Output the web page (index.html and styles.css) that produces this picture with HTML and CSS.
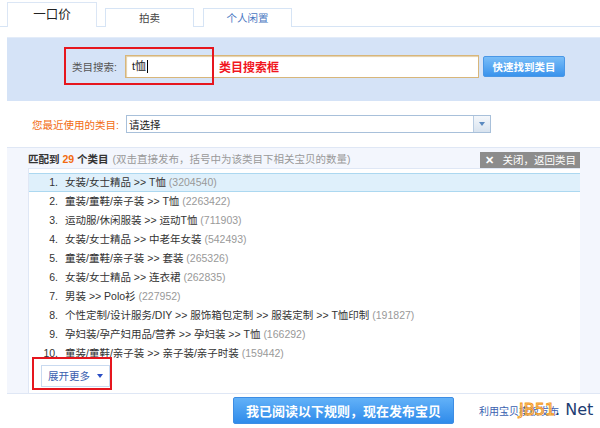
FILE: index.html
```html
<!DOCTYPE html>
<html lang="zh-CN">
<head>
    <meta charset="UTF-8">
    <title>发布宝贝 - 选择类目</title>
    <link rel="stylesheet" href="styles.css">
</head>
<body>
    <div class="tabs">
        <div class="tab active">一口价</div>
        <div class="tab">拍卖</div>
        <div class="tab blue">个人闲置</div>
    </div>

    <div class="search-panel">
        <div class="search-row">
            <span class="search-label">类目搜索:</span>
            <div class="search-input">t恤<span class="caret"></span></div>
            <button class="btn-find">快速找到类目</button>
            <div class="mark mark-search"></div>
            <span class="mark-text">类目搜索框</span>
        </div>
    </div>

    <div class="recent">
        <span class="recent-label">您最近使用的类目:</span>
        <div class="select">
            <span>请选择</span>
            <span class="select-arrow"><i></i></span>
        </div>
    </div>

    <div class="match-panel">
        <div class="match-head">
            <span class="match-title">匹配到 <em>29</em> 个类目</span>
            <span class="match-tip">(双击直接发布，括号中为该类目下相关宝贝的数量)</span>
            <span class="btn-close"><b>✕</b> 关闭，返回类目</span>
        </div>
        <div class="match-list">
            <ul>
                <li class="on"><span class="no">1.</span>女装/女士精品 &gt;&gt; T恤 <span class="count">(3204540)</span></li>
                <li><span class="no">2.</span>童装/童鞋/亲子装 &gt;&gt; T恤 <span class="count">(2263422)</span></li>
                <li><span class="no">3.</span>运动服/休闲服装 &gt;&gt; 运动T恤 <span class="count">(711903)</span></li>
                <li><span class="no">4.</span>女装/女士精品 &gt;&gt; 中老年女装 <span class="count">(542493)</span></li>
                <li><span class="no">5.</span>童装/童鞋/亲子装 &gt;&gt; 套装 <span class="count">(265326)</span></li>
                <li><span class="no">6.</span>女装/女士精品 &gt;&gt; 连衣裙 <span class="count">(262835)</span></li>
                <li><span class="no">7.</span>男装 &gt;&gt; Polo衫 <span class="count">(227952)</span></li>
                <li><span class="no">8.</span>个性定制/设计服务/DIY &gt;&gt; 服饰箱包定制 &gt;&gt; 服装定制 &gt;&gt; T恤印制 <span class="count">(191827)</span></li>
                <li><span class="no">9.</span>孕妇装/孕产妇用品/营养 &gt;&gt; 孕妇装 &gt;&gt; T恤 <span class="count">(166292)</span></li>
                <li><span class="no">10.</span>童装/童鞋/亲子装 &gt;&gt; 亲子装/亲子时装 <span class="count">(159442)</span></li>
            </ul>
            <div class="more-wrap">
                <span class="btn-more">展开更多 <i></i></span>
                <div class="mark mark-more"></div>
            </div>
        </div>
    </div>

    <div class="footer">
        <button class="btn-publish">我已阅读以下规则，现在发布宝贝</button>
        <a class="tpl-link" href="#">利用宝贝模板发布</a>
        <span class="watermark"><span class="wm-jb">JB51</span>. Net</span>
    </div>
</body>
</html>
```

FILE: styles.css
```css
body {
    margin: 0;
    font-family: "Liberation Sans", "Noto Sans CJK SC", sans-serif;
    font-size: 10.5px;
    color: #333;
    background: #fff;
    width: 600px;
    height: 428px;
    overflow: hidden;
}
.tabs {
    display: flex;
    align-items: flex-end;
    height: 26px;
    padding-left: 7px;
    border-bottom: 1px solid #d6e4f5;
}
.tab {
    box-sizing: border-box;
    width: 89px;
    height: 19px;
    margin-right: 9px;
    margin-bottom: -1px;
    border: 1px solid #d6e4f5;
    border-bottom: none;
    text-align: center;
    line-height: 19px;
    color: #444;
    background: #fff;
}
.tab.active {
    width: 90px;
    height: 25px;
    margin-right: 8px;
    line-height: 25px;
    font-size: 12.5px;
    color: #222;
    border-color: #dbe6f5;
}
.tab.blue {
    color: #4a78c2;
}
.search-panel {
    margin: 10px 0 0 7px;
    height: 64px;
    background: #d5e3f7;
    border-top: 1px solid #e3ecf9;
    box-sizing: border-box;
}
.search-row {
    position: relative;
    display: flex;
    align-items: center;
    padding: 17px 0 0 65px;
}
.search-label {
    flex-shrink: 0;
    width: 53px;
    color: #555;
    white-space: nowrap;
}
.search-input {
    flex-shrink: 0;
    box-sizing: border-box;
    width: 354px;
    height: 23px;
    border: 1px solid #d8b67a;
    box-shadow: inset 1px 1px 1px #e4cfa8;
    background: #fff;
    padding-left: 6px;
    line-height: 21px;
    font-size: 11px;
    color: #222;
}
.caret {
    display: inline-block;
    width: 1px;
    height: 13px;
    margin-left: 1px;
    background: #000;
    vertical-align: -3px;
}
.btn-find {
    flex-shrink: 0;
    margin-left: 4px;
    width: 82px;
    height: 21px;
    border: 1px solid #4a97e6;
    border-radius: 2px;
    background: linear-gradient(#79bdf8, #3a93ec);
    color: #fff;
    font-family: inherit;
    font-size: 10.5px;
    font-weight: bold;
    padding: 0;
}
.mark {
    position: absolute;
    border: 2px solid #e6161e;
    box-sizing: border-box;
}
.mark-search {
    left: 57px;
    top: 9px;
    width: 150px;
    height: 38px;
}
.mark-text {
    position: absolute;
    left: 212px;
    top: 20px;
    color: #f1161e;
    font-size: 12px;
    font-weight: bold;
}
.recent {
    display: flex;
    align-items: center;
    margin-top: 14px;
    padding-left: 32px;
}
.recent-label {
    flex-shrink: 0;
    width: 94px;
    color: #f26b10;
    white-space: nowrap;
}
.select {
    box-sizing: border-box;
    display: flex;
    justify-content: space-between;
    align-items: center;
    width: 365px;
    height: 18px;
    border: 1px solid #a8c0da;
    padding-left: 2px;
    color: #222;
}
.select-arrow {
    box-sizing: border-box;
    width: 17px;
    height: 16px;
    border-left: 1px solid #b8cce2;
    background: linear-gradient(#f4f7fb, #d8e3ef);
    display: flex;
    align-items: center;
    justify-content: center;
}
.select-arrow i {
    width: 0;
    height: 0;
    border-left: 3px solid transparent;
    border-right: 3px solid transparent;
    border-top: 4px solid #5b8ac0;
}
.match-panel {
    margin: 14px 0 0 7px;
    padding: 0 20px 0 21px;
    background: #f3f6fd;
    border-top: 1px solid #dfe7f5;
    border-bottom: 1px solid #dfe7f5;
}
.match-head {
    display: flex;
    align-items: center;
    height: 20px;
    color: #999;
    white-space: nowrap;
}
.match-title {
    font-weight: bold;
    color: #333;
    margin-right: 4px;
}
.match-title em {
    font-style: normal;
    color: #f26b10;
}
.match-tip {
    flex: 1;
}
.btn-close {
    height: 16px;
    line-height: 16px;
    padding: 0 4px 0 5px;
    margin-top: 3px;
    background: #8c8c8c;
    color: #fff;
}
.btn-close b {
    margin-right: 6px;
}
.match-list {
    background: #fff;
    border-left: 1px solid #dfe7f5;
    border-top: 1px solid #dfe7f5;
    padding-top: 4px;
}
.match-list ul {
    margin: 0;
    padding: 0;
    list-style: none;
}
.match-list li {
    display: flex;
    height: 19px;
    line-height: 19px;
    white-space: pre;
}
.match-list li.on {
    box-sizing: border-box;
    line-height: 17px;
    background: #dff0fb;
    border-top: 1px solid #acd8f0;
    border-bottom: 1px solid #acd8f0;
}
.no {
    width: 29px;
    text-align: right;
    margin-right: 7px;
}
.count {
    color: #999;
}
.more-wrap {
    position: relative;
    padding: 2px 0 6px 12px;
}
.btn-more {
    display: inline-block;
    box-sizing: border-box;
    height: 22px;
    line-height: 20px;
    padding: 0 6px;
    border: 1px solid #c9daf0;
    color: #3a5fb0;
    background: #fff;
}
.btn-more i {
    display: inline-block;
    width: 0;
    height: 0;
    margin-left: 4px;
    border-left: 3px solid transparent;
    border-right: 3px solid transparent;
    border-top: 4px solid #2a4dc4;
    vertical-align: 2px;
}
.mark-more {
    left: 3px;
    top: -6px;
    width: 80px;
    height: 33px;
}
.footer {
    position: relative;
    display: flex;
    align-items: center;
    padding: 3px 0 0 233px;
}
.btn-publish {
    flex-shrink: 0;
    width: 221px;
    height: 27px;
    border: 1px solid #3d8de4;
    border-radius: 2px;
    background: linear-gradient(#62b1f8, #2f8bea);
    color: #fff;
    font-family: inherit;
    font-size: 13px;
    font-weight: bold;
    padding: 0;
}
.tpl-link {
    margin-left: 25px;
    font-size: 10px;
    color: #3a5fb0;
    text-decoration: none;
    white-space: nowrap;
}
.watermark {
    position: absolute;
    left: 519px;
    top: 6px;
    font-family: "DejaVu Sans", sans-serif;
    font-size: 16px;
    color: #1d3c72;
    white-space: nowrap;
}
.wm-jb {
    color: rgba(255, 240, 215, 0.6);
    -webkit-text-stroke: 1px #f39a22;
}
```
